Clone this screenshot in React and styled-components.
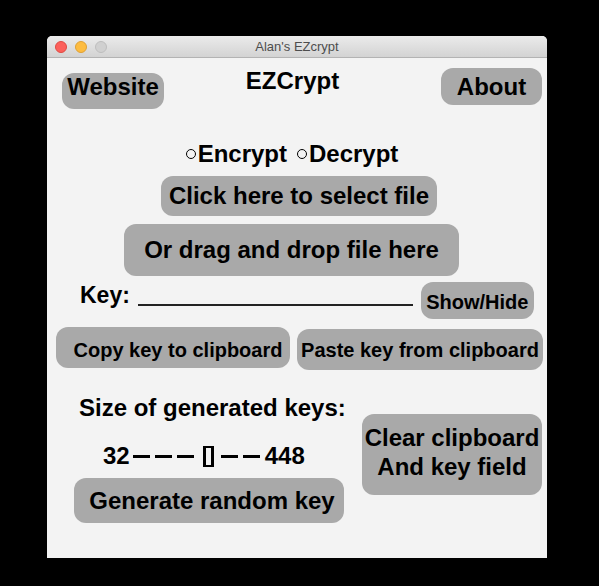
import React from 'react';
import styled, { createGlobalStyle } from 'styled-components';

const GlobalStyle = createGlobalStyle`
  html, body {
    margin: 0;
    padding: 0;
    background: #000;
  }
  body {
    font-family: 'Liberation Sans', Arial, Helvetica, sans-serif;
  }
`;

const Window = styled.div`
  width: 500px;
  margin: 36px 0 0 47px;
  border-radius: 5px 5px 0 0;
  overflow: hidden;
  background: #f3f3f3;
`;

const TitleBar = styled.div`
  display: grid;
  grid-template-columns: 1fr auto 1fr;
  align-items: center;
  height: 21px;
  padding: 0 8px;
  background: linear-gradient(#ebebeb, #d3d3d3);
  border-bottom: 1px solid #b3b3b3;
`;

const Lights = styled.div`
  display: flex;
  gap: 8px;
`;

const Light = styled.span`
  box-sizing: border-box;
  width: 12px;
  height: 12px;
  border-radius: 50%;
  background: ${(p) => p.$fill};
  border: 1px solid ${(p) => p.$edge};
`;

const WindowTitle = styled.div`
  font-size: 13px;
  color: #4d4d4d;
`;

const Content = styled.div`
  height: 500px;
  display: flex;
  flex-direction: column;
  align-items: center;
  color: #000;
  font-weight: bold;
`;

const Header = styled.div`
  align-self: stretch;
  display: flex;
  align-items: flex-start;
  padding: 0 5px 0 15px;
`;

const AppTitle = styled.h1`
  flex: 1;
  margin: 11px 0 0;
  padding-right: 20px;
  text-align: center;
  font-size: 24px;
  line-height: 24px;
  font-weight: bold;
`;

const Button = styled.button`
  display: flex;
  align-items: center;
  justify-content: center;
  flex-shrink: 0;
  box-sizing: border-box;
  width: ${(p) => p.$w}px;
  height: ${(p) => p.$h}px;
  margin: ${(p) => p.$m || '0'};
  padding: ${(p) => p.$pad || '0'};
  border: none;
  border-radius: 12px;
  background: #a9a9a9;
  color: #000;
  font-family: inherit;
  font-weight: bold;
  font-size: ${(p) => p.$size || 24}px;
  line-height: ${(p) => p.$lh || p.$size || 24}px;
  text-align: center;
  white-space: nowrap;
  cursor: pointer;
`;

const RadioRow = styled.div`
  display: flex;
  align-items: center;
  gap: 10px;
  height: 24px;
  margin: 33px 0 2px;
  padding-right: 10px;
  font-size: 24px;
  line-height: 24px;
`;

const Option = styled.label`
  display: flex;
  align-items: center;
  gap: 2px;
  cursor: pointer;
`;

const Circle = styled.span`
  box-sizing: border-box;
  width: 10px;
  height: 10px;
  margin-bottom: 1px;
  border: 1px solid #000;
  border-radius: 50%;
`;

const KeyRow = styled.div`
  align-self: stretch;
  display: flex;
  align-items: flex-start;
  margin-top: 6px;
  padding-left: 33px;
`;

const KeyLabel = styled.span`
  margin-top: 2px;
  font-size: 23px;
  line-height: 22px;
`;

const KeyInput = styled.input`
  box-sizing: border-box;
  width: 275px;
  height: 24px;
  margin-left: 8px;
  padding: 0;
  border: none;
  border-bottom: 2px solid #222;
  background: transparent;
  outline: none;
  font-family: inherit;
  font-size: 18px;
`;

const ClipRow = styled.div`
  align-self: stretch;
  display: flex;
  align-items: flex-start;
  gap: 7px;
  margin-top: 8px;
  padding-left: 9px;
`;

const KeysRow = styled.div`
  align-self: stretch;
  display: flex;
  align-items: flex-start;
  margin-top: 26px;
  padding-left: 27px;
`;

const LeftCol = styled.div`
  width: 270px;
  display: flex;
  flex-direction: column;
`;

const SizeLabel = styled.div`
  margin-left: 5px;
  font-size: 24px;
  line-height: 24px;
  white-space: nowrap;
`;

const Slider = styled.div`
  display: flex;
  align-items: center;
  height: 24px;
  margin: 24px 0 0 29px;
  font-size: 24px;
  line-height: 24px;
`;

const Dash = styled.span`
  width: 17px;
  height: 3px;
  margin-left: ${(p) => p.$gap}px;
  background: #000;
`;

const Thumb = styled.span`
  box-sizing: border-box;
  width: 11px;
  height: 21px;
  margin-left: 9px;
  border: 2px solid #000;
  border-left-width: 3px;
  border-right-width: 3px;
`;

const Num = styled.span`
  margin-left: ${(p) => p.$gap || 0}px;
`;

export default function App() {
  return (
    <>
      <GlobalStyle />
      <Window>
        <TitleBar>
          <Lights>
            <Light $fill="#fc605b" $edge="#de4a42" />
            <Light $fill="#fdbc40" $edge="#dea034" />
            <Light $fill="#d0d0d0" $edge="#bdbdbd" />
          </Lights>
          <WindowTitle>Alan's EZcrypt</WindowTitle>
          <span />
        </TitleBar>
        <Content>
          <Header>
            <Button $w={102} $h={36} $m="15px 0 0 0" $pad="0 0 8px 0">
              Website
            </Button>
            <AppTitle>EZCrypt</AppTitle>
            <Button $w={101} $h={37} $m="10px 0 0 0">
              About
            </Button>
          </Header>

          <RadioRow>
            <Option>
              <Circle />
              Encrypt
            </Option>
            <Option>
              <Circle />
              Decrypt
            </Option>
          </RadioRow>

          <Button $w={276} $h={40} $m="8px 0 0 4px">
            Click here to select file
          </Button>
          <Button $w={335} $h={52} $m="8px 11px 0 0">
            Or drag and drop file here
          </Button>

          <KeyRow>
            <KeyLabel>Key:</KeyLabel>
            <KeyInput type="password" />
            <Button $w={113} $h={37} $size={20} $pad="3px 0 0" $m="0 0 0 8px">
              Show/Hide
            </Button>
          </KeyRow>

          <ClipRow>
            <Button $w={234} $h={41} $size={20} $pad="4px 0 0 10px">
              Copy key to clipboard
            </Button>
            <Button $w={246} $h={41} $size={20} $m="2px 0 0 0">
              Paste key from clipboard
            </Button>
          </ClipRow>

          <KeysRow>
            <LeftCol>
              <SizeLabel>Size of generated keys:</SizeLabel>
              <Slider>
                <Num>32</Num>
                <Dash $gap={3} />
                <Dash $gap={5} />
                <Dash $gap={5} />
                <Thumb />
                <Dash $gap={7} />
                <Dash $gap={5} />
                <Num $gap={5}>448</Num>
              </Slider>
              <Button $w={270} $h={45} $pad="0 0 0 6px" $m="10px 0 0 0">
                Generate random key
              </Button>
            </LeftCol>
            <Button $w={180} $h={81} $lh={29} $pad="0 0 5px" $m="18px 0 0 18px">
              <span>
                Clear clipboard
                <br />
                And key field
              </span>
            </Button>
          </KeysRow>
        </Content>
      </Window>
    </>
  );
}
